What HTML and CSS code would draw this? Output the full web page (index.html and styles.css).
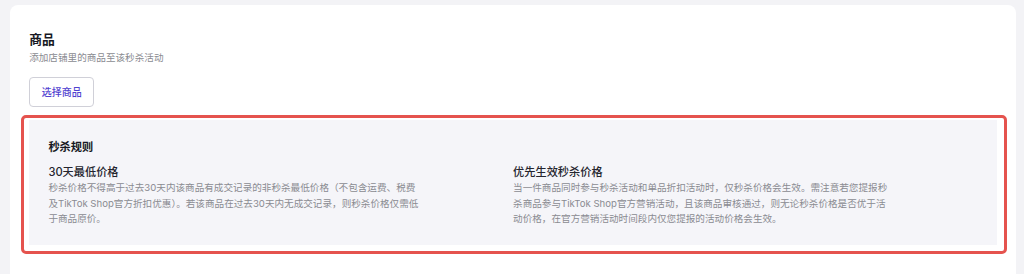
FILE: index.html
```html
<!DOCTYPE html>
<html lang="zh-CN">
<head>
<meta charset="utf-8">
<title>商品</title>
<link rel="stylesheet" href="styles.css">
</head>
<body>
<div class="card">
  <h2 class="section-title">商品</h2>
  <p class="section-sub">添加店铺里的商品至该秒杀活动</p>
  <button class="btn-select" type="button">选择商品</button>
  <div class="rules">
    <h3 class="rules-title">秒杀规则</h3>
    <div class="rules-grid">
      <div class="rule">
        <h4 class="rule-title">30天最低价格</h4>
        <p class="rule-desc">秒杀价格不得高于过去30天内该商品有成交记录的非秒杀最低价格（不包含运费、税费<br>及TikTok Shop官方折扣优惠）。若该商品在过去30天内无成交记录，则秒杀价格仅需低<br>于商品原价。</p>
      </div>
      <div class="rule">
        <h4 class="rule-title">优先生效秒杀价格</h4>
        <p class="rule-desc">当一件商品同时参与秒杀活动和单品折扣活动时，仅秒杀价格会生效。需注意若您提报秒<br>杀商品参与TikTok Shop官方营销活动，且该商品审核通过，则无论秒杀价格是否优于活<br>动价格，在官方营销活动时间段内仅您提报的活动价格会生效。</p>
      </div>
    </div>
  </div>
  <div class="highlight"></div>
</div>
</body>
</html>
```

FILE: styles.css
```css
html, body {
  margin: 0;
  padding: 0;
}
body {
  background: #f3f3f6;
  font-family: "Inter", "Noto Sans CJK SC", sans-serif;
  color: #161823;
  padding: 5px 8px 0 10px;
  height: 274px;
  box-sizing: border-box;
  overflow: hidden;
}
.card {
  position: relative;
  background: #ffffff;
  border-radius: 8px 8px 0 0;
  padding: 25.5px 19px 10px 19.2px;
  height: 269px;
  box-sizing: border-box;
}
.section-title {
  margin: 0;
  font-size: 12.8px;
  line-height: 18px;
  font-weight: 600;
  color: #161823;
}
.section-sub {
  margin: 2px 0 0;
  font-size: 9.6px;
  line-height: 14px;
  color: #8a8b91;
}
.btn-select {
  display: block;
  margin-top: 12px;
  width: 65px;
  height: 30px;
  padding: 0;
  background: #ffffff;
  border: 1px solid #d0d0d8;
  border-radius: 4px;
  font-family: "Inter", "Noto Sans CJK SC", sans-serif;
  font-size: 10px;
  font-weight: 500;
  color: #5142d0;
}
.rules {
  margin-top: 13px;
  background: #f5f5f9;
  padding: 19px 19.2px 18px;
}
.rules-title {
  margin: 0;
  font-size: 11.2px;
  line-height: 16px;
  font-weight: 600;
  color: #161823;
}
.rules-grid {
  margin-top: 9.5px;
  display: grid;
  grid-template-columns: 1fr 1fr;
}
.rule-title {
  margin: 0;
  font-size: 11.2px;
  line-height: 16px;
  font-weight: 500;
  color: #25252e;
}
.rule-desc {
  margin: 0;
  font-size: 9.6px;
  line-height: 15.5px;
  color: #8a8b91;
  white-space: nowrap;
}
.highlight {
  position: absolute;
  left: 10.7px;
  top: 110px;
  width: 986px;
  height: 139px;
  box-sizing: border-box;
  border: 3px solid #e5534e;
  border-radius: 5px;
  pointer-events: none;
}
```
